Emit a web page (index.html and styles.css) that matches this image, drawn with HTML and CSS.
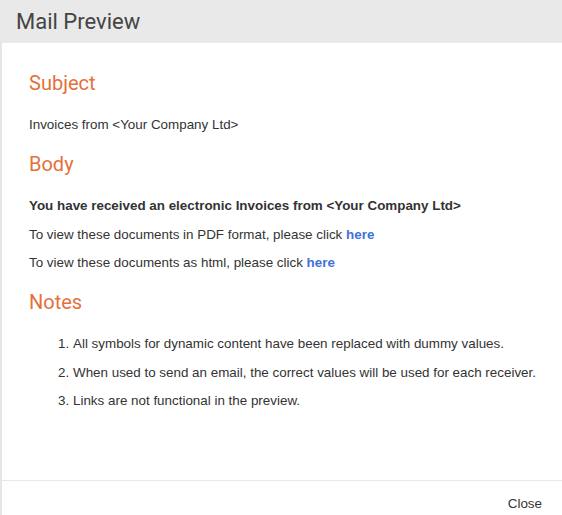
FILE: index.html
```html
<!DOCTYPE html>
<html lang="en">
<head>
    <meta charset="UTF-8">
    <title>Mail Preview</title>
    <link rel="stylesheet" href="styles.css">
</head>
<body>
    <div class="dialog">
        <div class="dialog-header">Mail Preview</div>
        <div class="dialog-body">
            <h3>Subject</h3>
            <p>Invoices from &lt;Your Company Ltd&gt;</p>

            <h3>Body</h3>
            <p><strong>You have received an electronic Invoices from &lt;Your Company Ltd&gt;</strong></p>
            <p>To view these documents in PDF format, please click <a href="#">here</a></p>
            <p>To view these documents as html, please click <a href="#">here</a></p>

            <h3>Notes</h3>
            <ol>
                <li>All symbols for dynamic content have been replaced with dummy values.</li>
                <li>When used to send an email, the correct values will be used for each receiver.</li>
                <li>Links are not functional in the preview.</li>
            </ol>
        </div>
        <div class="dialog-footer">
            <span class="close-btn">Close</span>
        </div>
    </div>
</body>
</html>
```

FILE: styles.css
```css
body {
    margin: 0;
    font-family: "Liberation Sans", Arial, sans-serif;
    color: #333;
    background: white;
}
.dialog {
    width: 562px;
    height: 515px;
    display: flex;
    flex-direction: column;
    border-left: 2px solid #e6e6e6;
    box-sizing: border-box;
}
.dialog-header {
    background: #e9e9e9;
    height: 43px;
    margin-left: -2px;
    padding-left: 16px;
    font-family: Roboto, "Liberation Sans", sans-serif;
    font-size: 22px;
    line-height: 44px;
    color: #444;
}
.dialog-body {
    flex: 1;
    padding: 28px 20px 0 27px;
    font-size: 13.4px;
}
h3 {
    margin: 17px 0 20px;
    font-family: Roboto, "Liberation Sans", sans-serif;
    font-size: 20px;
    font-weight: normal;
    line-height: 24px;
    color: #e4713a;
}
h3:first-child {
    margin-top: 0;
}
p {
    margin: 0 0 8.5px;
    line-height: 20px;
}
strong {
    font-weight: bold;
}
a {
    color: #3f72d9;
    font-weight: bold;
    text-decoration: none;
}
ol {
    margin: 0;
    padding-left: 44px;
}
li {
    line-height: 20px;
    margin-bottom: 8.5px;
}
.dialog-footer {
    border-top: 1px solid #e8e8e8;
    height: 34px;
    display: flex;
    justify-content: flex-end;
    align-items: center;
    padding-right: 20px;
    font-size: 13.4px;
}
.close-btn {
    padding-top: 10px;
    color: #333;
}
```
